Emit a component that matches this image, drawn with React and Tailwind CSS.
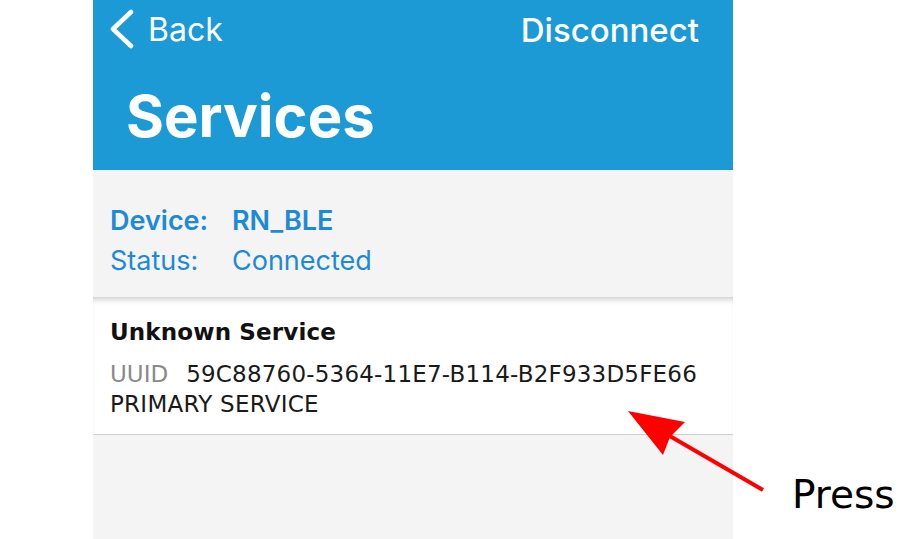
import React from "react";

const sf = { fontFamily: "Inter, 'Liberation Sans', sans-serif" };
const dv = { fontFamily: "'DejaVu Sans', Verdana, sans-serif" };

const ChevronLeft = () => (
  <svg width="26" height="42" viewBox="0 0 26 42" className="shrink-0">
    <path d="M21 3 L3 20 L21 37" fill="none" stroke="white" strokeWidth="4.5" strokeLinecap="round" strokeLinejoin="round" />
  </svg>
);

const Arrow = () => (
  <svg className="absolute inset-0 pointer-events-none" width="919" height="539" viewBox="0 0 919 539">
    <line x1="763" y1="490" x2="668" y2="435" stroke="#ff0000" strokeWidth="4" />
    <polygon points="628,411 685,422 670,437 663,455" fill="#ff0000" />
  </svg>
);

export default function App() {
  return (
    <div className="relative w-[919px] h-[539px] bg-white flex overflow-hidden">
      <div className="ml-[93px] w-[640px] h-full flex flex-col bg-[#f4f4f4]">
        {/* header */}
        <div className="h-[170px] bg-[#1b9ad6] text-white flex flex-col" style={sf}>
          <div className="h-[60px] flex items-center justify-between pl-[17px] pr-[34px]">
            <div className="flex items-center gap-[12px]">
              <ChevronLeft />
              <span className="text-[32px] leading-[60px]">Back</span>
            </div>
            <span className="text-[33px] leading-[60px] font-medium">Disconnect</span>
          </div>
          <h1 className="mt-[26px] pl-[33px] text-[58px] leading-[60px] font-bold">Services</h1>
        </div>

        {/* device info */}
        <div className="pt-[31px] pb-[16px] pl-[17px] text-[#1d8ad6] text-[27px] leading-[40px]" style={sf}>
          <div className="flex">
            <span className="w-[122px] font-semibold">Device:</span>
            <span className="font-semibold">RN_BLE</span>
          </div>
          <div className="flex">
            <span className="w-[122px]">Status:</span>
            <span>Connected</span>
          </div>
        </div>

        {/* service row */}
        <div className="bg-white border-b border-[#cfcfcf] pt-[20px] pb-[15px] pl-[17px] shadow-[inset_0_6px_6px_-4px_rgba(0,0,0,0.22)]" style={dv}>
          <div className="text-[23px] leading-[30px] font-bold tracking-[0.15px] text-[#111]">Unknown Service</div>
          <div className="mt-[12px] flex text-[23px] leading-[30px] text-[#1a1a1a]">
            <span className="text-[#8a8a8a] mr-[18px]">UUID</span>
            <span className="tracking-[0.2px]">59C88760-5364-11E7-B114-B2F933D5FE66</span>
          </div>
          <div className="text-[23px] leading-[30px] tracking-[0.25px] text-[#1a1a1a]">PRIMARY SERVICE</div>
        </div>

        <div className="flex-1" />
      </div>

      <div className="flex-1 pt-[472px] pl-[59px]">
        <span className="text-[39px] leading-[46px] text-black" style={dv}>Press</span>
      </div>

      <Arrow />
    </div>
  );
}
